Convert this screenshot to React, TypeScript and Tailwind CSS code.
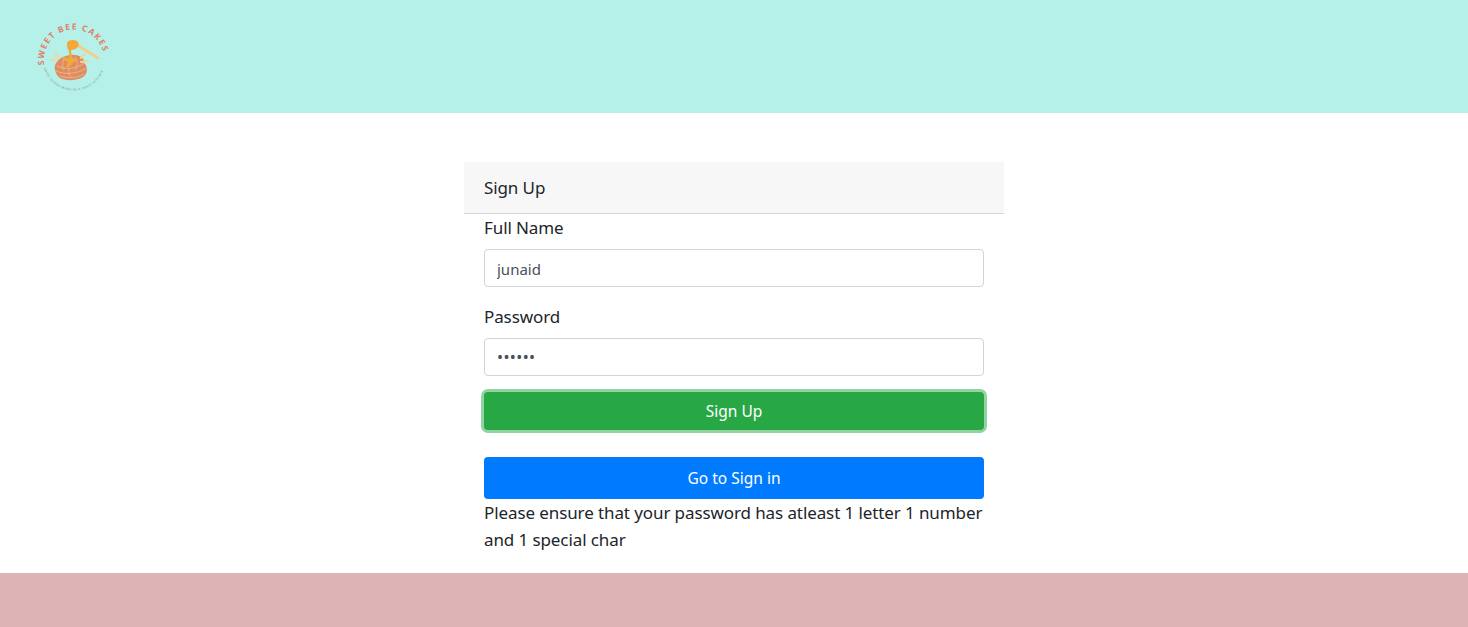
export default function App() {
  return (
    <div className="min-h-[627px] flex flex-col bg-white font-['Noto_Sans',sans-serif] text-[17px] tracking-[-0.1px] leading-[27px] text-[#212529]">
      <header className="h-[113px] bg-[#b5f1e9] pl-[35px] pt-[20px]">
        <svg width="80" height="80" viewBox="0 0 80 80" className="block overflow-visible">
          <defs>
            <path id="arcTop" d="M 9.500 45 A 30 30 0 1 1 68.500 45" />
            <path id="arcBottom" d="M 8.500 47 A 31.500 31.500 0 0 0 69.500 47" />
          </defs>
          <text fontFamily="'Noto Sans', sans-serif" fontSize="8.400" fontWeight="700" fill="#e07f68" letterSpacing="1.350">
            <textPath href="#arcTop" startOffset="0">SWEET BEE CAKES</textPath>
          </text>
          <text fontFamily="'Noto Sans', sans-serif" fontSize="3" fontWeight="600" fill="#94aaa4" letterSpacing="0.450">
            <textPath href="#arcBottom" startOffset="1">SWEET GOODS MADE IN A SWEET KITCHEN</textPath>
          </text>
          <path d="M42 25 L63 38" stroke="#f4cd8c" strokeWidth="2.800" strokeLinecap="round" />
          <path d="M20 50 C18 43 26 36 35 35 C44 34 50 38 49 43 C53 46 53 54 48 57 C42 61 30 61 25 58 C22 56 21 53 20 50 Z" fill="#de8d63" />
          <path d="M22 46 C30 50 42 49 49 43 M21 51 C30 55 43 54 51 48 M25 56 C33 59 43 58 49 54 M30 38 C27 42 27 46 29 50 M40 37 C43 41 43 46 40 50 M34 49 C33 52 34 55 36 57" fill="none" stroke="#f2b68c" strokeWidth="0.900" />
          <path d="M32 24 C32 20 38 19 42 21 C45 23 44 28 40 29 C38 30 37 30 36 30 C36 33 37 35 37 38 C40 38 42 38 42 40 C41 42 38 42 37 44 C35 47 32 47 31 47 C32 44 33 43 32 41 C30 41 28 40 27 38 C29 37 32 38 34 38 C35 35 34 32 33 29 C32 27 32 26 32 24 Z" fill="#f3a83b" />
          <path d="M20 33 L24 38 M16 40 L22 40 M50 34 L46 38 M53 41 L46 42" stroke="#f6d49a" strokeWidth="2" strokeLinecap="round" />
        </svg>
      </header>

      <main className="flex-1 pt-[49px] pb-[20px]">
        <section className="mx-auto w-[540px]">
          <h1 className="h-[52px] border-b border-[#d5d6d8] bg-[#f7f7f7] px-[20px] pt-[12px] text-[17px] font-normal">Sign Up</h1>
          <form className="px-[20px]">
            <label htmlFor="fullname" className="mb-2 block">Full Name</label>
            <input id="fullname" readOnly value="junaid" className="mb-4 block h-[38px] w-full rounded border border-[#ced4da] bg-white px-3 pt-[1px] text-[15px] tracking-normal text-[#495057] outline-none" />
            <label htmlFor="password" className="mb-2 block">Password</label>
            <input id="password" readOnly type="password" value="secret" className="mb-4 block h-[38px] w-full rounded border border-[#ced4da] bg-white px-3 text-[16px] tracking-[0.4px] text-[#495057] outline-none" />
            <button type="button" className="block h-[38px] w-full rounded bg-[#28a745] text-[15.500px] tracking-normal text-white shadow-[0_0_0_3px_rgba(40,167,69,0.5)]">Sign Up</button>
            <button type="button" className="mt-[27px] block h-[42px] w-full rounded bg-[#007bff] text-[15.500px] tracking-normal text-white">Go to Sign in</button>
            <p>Please ensure that your password has atleast 1 letter 1 number and 1 special char</p>
          </form>
        </section>
      </main>

      <footer className="h-[54px] bg-[#deb3b5]" />
    </div>
  );
}
